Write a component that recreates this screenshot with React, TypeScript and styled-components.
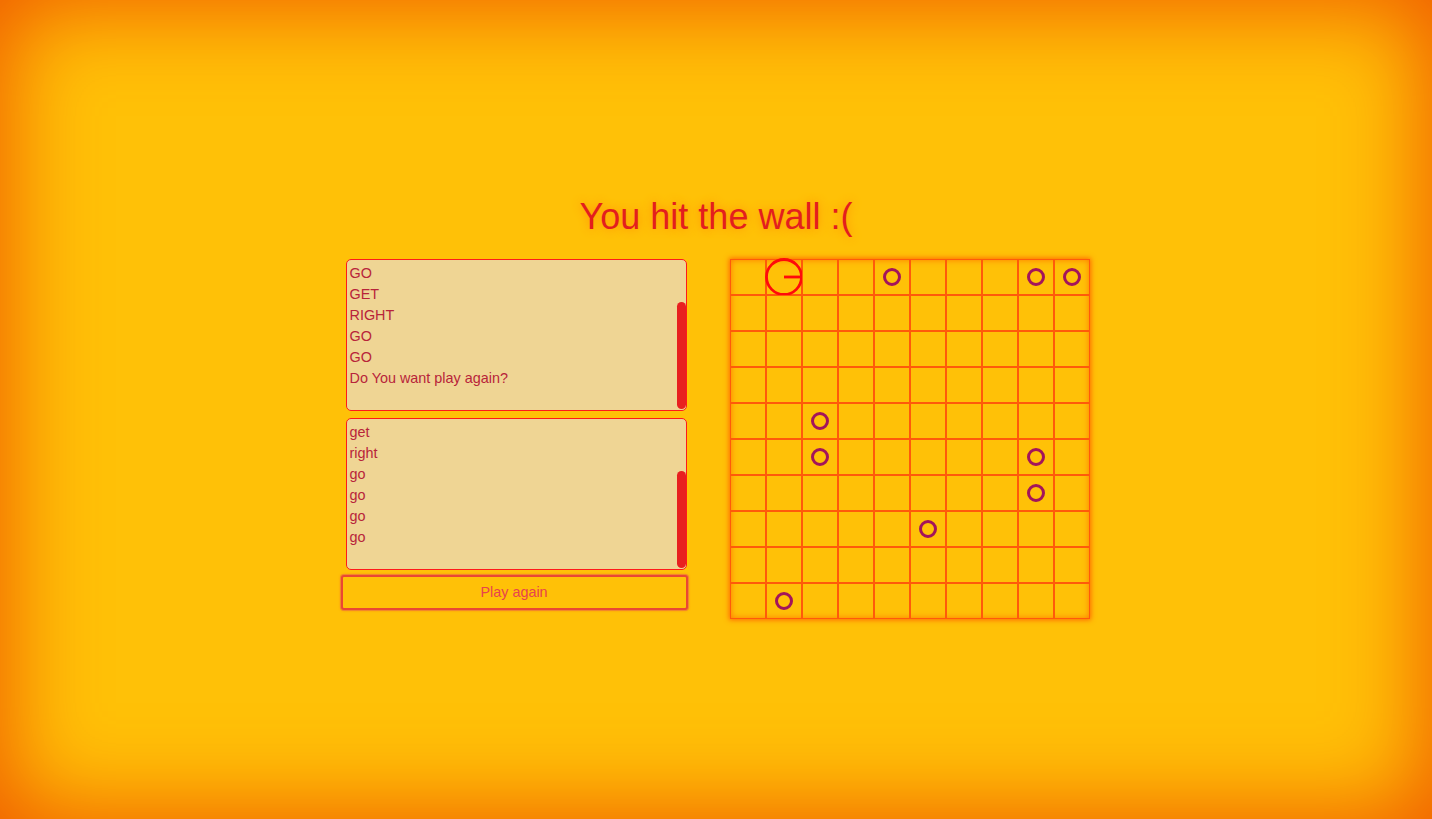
import React, { useEffect, useRef, useState } from "react";
import styled, { createGlobalStyle } from "styled-components";

const GlobalStyle = createGlobalStyle`
  html, body {
    margin: 0;
    padding: 0;
  }
  body {
    font-family: "Liberation Sans", Arial, sans-serif;
    background: #ffc107;
  }
`;

const SIZE = 10;
const CELL = 36;

const coins: [number, number][] = [
  [4, 0],
  [8, 0],
  [9, 0],
  [2, 4],
  [2, 5],
  [8, 5],
  [8, 6],
  [5, 7],
  [1, 9],
];

const player = { x: 1, y: 0 };

const gameLog = [
  "START",
  "GO",
  "LEFT",
  "GO",
  "GET",
  "RIGHT",
  "GO",
  "GO",
  "Do You want play again?",
  "",
].join("\n");

const userLog = ["go", "left", "go", "go", "get", "right", "go", "go", "go", "go", ""].join("\n");

// textarea scrolled to the end, with a drawn scrollbar thumb
const LogBox = ({ value }: { value: string }) => {
  const ref = useRef<HTMLTextAreaElement>(null);
  const [thumb, setThumb] = useState({ top: 0, height: 0 });

  useEffect(() => {
    const el = ref.current;
    if (!el) return;
    el.scrollTop = el.scrollHeight;
    const ratio = el.clientHeight / el.scrollHeight;
    setThumb({ top: el.scrollTop * ratio, height: el.clientHeight * ratio });
  }, [value]);

  return (
    <LogWrap>
      <Log ref={ref} value={value} readOnly spellCheck={false} />
      {thumb.height > 0 && <Thumb style={{ top: thumb.top + 1, height: thumb.height }} />}
    </LogWrap>
  );
};

export default function App() {
  const isCoin = (x: number, y: number) => coins.some(([cx, cy]) => cx === x && cy === y);

  return (
    <Page>
      <GlobalStyle />
      <Title>You hit the wall :(</Title>
      <Game>
        <Side>
          <LogBox value={gameLog} />
          <LogBox value={userLog} />
          <PlayButton>Play again</PlayButton>
        </Side>
        <Board>
          {Array.from({ length: SIZE * SIZE }).map((_, i) => {
            const x = i % SIZE;
            const y = Math.floor(i / SIZE);
            return (
              <Cell key={i}>
                {isCoin(x, y) && <Coin />}
                {player.x === x && player.y === y && (
                  <Player viewBox="0 0 40 40">
                    <circle cx="20" cy="20" r="17.5" fill="none" stroke="#ff0a0a" strokeWidth="2.8" />
                    <line x1="20" y1="20" x2="37.5" y2="20" stroke="#ff0a0a" strokeWidth="2.8" />
                  </Player>
                )}
              </Cell>
            );
          })}
        </Board>
      </Game>
    </Page>
  );
}

const Page = styled.div`
  min-height: 100vh;
  box-sizing: border-box;
  display: flex;
  flex-direction: column;
  align-items: center;
  justify-content: center;
  padding: 0 2px 6px 0;
  background: #ffc107;
  box-shadow: inset 0 0 90px 8px #f05a00;
`;

const Title = styled.h1`
  margin: 1px 0 21px 2px;
  font-size: 36px;
  font-weight: 400;
  color: #e31e1e;
  text-shadow: 0 0 10px #ff8c00;
`;

const Game = styled.div`
  display: flex;
  align-items: flex-start;
  gap: 42px;
`;

const Side = styled.div`
  width: 347px;
  display: flex;
  flex-direction: column;
`;

const LogWrap = styled.div`
  position: relative;
  width: 341px;
  height: 152px;
  margin: 0 1px 7px 5px;
`;

const Log = styled.textarea`
  display: block;
  box-sizing: border-box;
  width: 100%;
  height: 100%;
  margin: 0;
  padding: 0 12px 0 3px;
  resize: none;
  outline: none;
  border: 1px solid #ff1a1a;
  border-radius: 5px;
  background: #efd594;
  color: #b8243a;
  font-family: "Liberation Sans", Arial, sans-serif;
  font-size: 14.4px;
  line-height: 21px;
  overflow-y: hidden;
`;

const Thumb = styled.div`
  position: absolute;
  right: 1px;
  width: 9px;
  background: #e8201f;
  border-radius: 5px;
`;

const PlayButton = styled.button`
  margin-top: -2px;
  height: 35px;
  width: 347px;
  box-sizing: border-box;
  background: #ffc107;
  border: 2px solid #ea4733;
  border-radius: 3px;
  box-shadow: 0 0 0 1px #f2872a, 0 0 3px #f26a1a;
  color: #e8434d;
  font-family: "Liberation Sans", Arial, sans-serif;
  font-size: 14.4px;
  cursor: pointer;
`;

const Board = styled.div`
  display: grid;
  grid-template-columns: repeat(${SIZE}, ${CELL}px);
  grid-template-rows: repeat(${SIZE}, ${CELL}px);
  box-shadow: 0 0 5px 1px #ff6a00, inset 0 0 6px 1px #ff7a00;
`;

const Cell = styled.div`
  box-sizing: border-box;
  border: 1px solid #ff5a0a;
  display: flex;
  align-items: center;
  justify-content: center;
`;

const Coin = styled.div`
  width: 18px;
  height: 18px;
  box-sizing: border-box;
  border: 3px solid #a3145b;
  border-radius: 50%;
`;

const Player = styled.svg`
  width: 40px;
  height: 40px;
  flex-shrink: 0;
`;
